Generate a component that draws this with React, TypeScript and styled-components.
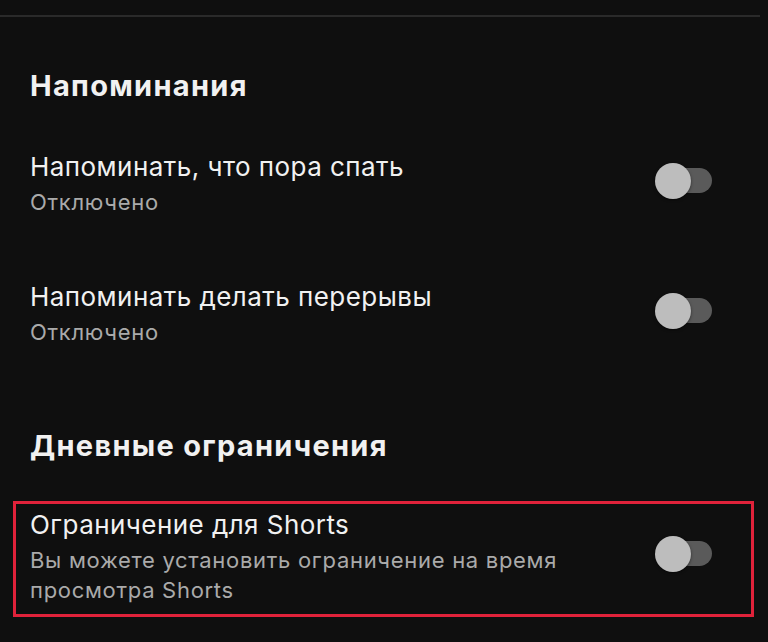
import React from "react"
import styled, { createGlobalStyle } from "styled-components"

const GlobalStyle = createGlobalStyle`
    html, body {
        margin: 0;
        padding: 0;
        background-color: #0f0f0f;
    }

    body {
        font-family: Inter, Roboto, "Noto Sans", "DejaVu Sans", sans-serif;
        -webkit-font-smoothing: antialiased;
    }
`

const SPage = styled.div`
    display: flex;
    flex-direction: column;
    width: 768px;
    height: 642px;
    padding-top: 15px;
    box-sizing: border-box;
    overflow: hidden;
    background-color: #0f0f0f;
    color: #f1f1f1;
`

const SDivider = styled.div`
    width: 760px;
    height: 2px;
    background-color: #2a2a2a;
`

const SSectionTitle = styled.h2<{ $top: number }>`
    margin: ${({ $top }) => $top}px 0 0 30px;
    font-size: 29px;
    line-height: 35px;
    font-weight: 700;
    letter-spacing: 1.3px;
    color: #f1f1f1;
`

const SRow = styled.div<{ $top: number }>`
    display: flex;
    align-items: center;
    justify-content: space-between;
    margin-top: ${({ $top }) => $top}px;
    padding: 0 56px 0 30px;
`

const SHighlight = styled.div<{ $top: number }>`
    display: flex;
    align-items: center;
    justify-content: space-between;
    margin: ${({ $top }) => $top}px 14px 0 13px;
    padding: 5px 39px 9px 14px;
    border: 3px solid #e0223a;
`

const SText = styled.div`
    display: flex;
    flex-direction: column;
    gap: 4px;
`

const STitle = styled.div`
    font-size: 26px;
    line-height: 32px;
    font-weight: 400;
    letter-spacing: 0.45px;
    color: #f1f1f1;
`

const SSubtitle = styled.div<{ $width?: number }>`
    max-width: ${({ $width }) => ($width ? `${$width}px` : "none")};
    font-size: 22px;
    line-height: 30px;
    font-weight: 400;
    letter-spacing: 0.7px;
    color: #aaaaaa;
`

const SToggle = styled.div`
    position: relative;
    flex-shrink: 0;
    width: 57px;
    height: 36px;
    margin-bottom: 7px;
`

const STrack = styled.div`
    position: absolute;
    top: 5px;
    right: 0;
    width: 44px;
    height: 25px;
    border-radius: 13px;
    background-color: #5a5a5a;
`

const SKnob = styled.div`
    position: absolute;
    top: 0;
    left: 0;
    width: 36px;
    height: 36px;
    border-radius: 50%;
    background-color: #bdbdbd;
    box-shadow: 0 1px 3px rgba(0, 0, 0, 0.5);
`

const Toggle = () => (
    <SToggle>
        <STrack />
        <SKnob />
    </SToggle>
)

export default function App() {
    return (
        <>
            <GlobalStyle />
            <SPage>
                <SDivider />

                <SSectionTitle $top={51}>Напоминания</SSectionTitle>

                <SRow $top={48}>
                    <SText>
                        <STitle>Напоминать, что пора спать</STitle>
                        <SSubtitle>Отключено</SSubtitle>
                    </SText>
                    <Toggle />
                </SRow>

                <SRow $top={64}>
                    <SText>
                        <STitle>Напоминать делать перерывы</STitle>
                        <SSubtitle>Отключено</SSubtitle>
                    </SText>
                    <Toggle />
                </SRow>

                <SSectionTitle $top={81}>Дневные ограничения</SSectionTitle>

                <SHighlight $top={38}>
                    <SText>
                        <STitle>Ограничение для Shorts</STitle>
                        <SSubtitle $width={560}>
                            Вы можете установить ограничение на время просмотра Shorts
                        </SSubtitle>
                    </SText>
                    <Toggle />
                </SHighlight>
            </SPage>
        </>
    )
}
